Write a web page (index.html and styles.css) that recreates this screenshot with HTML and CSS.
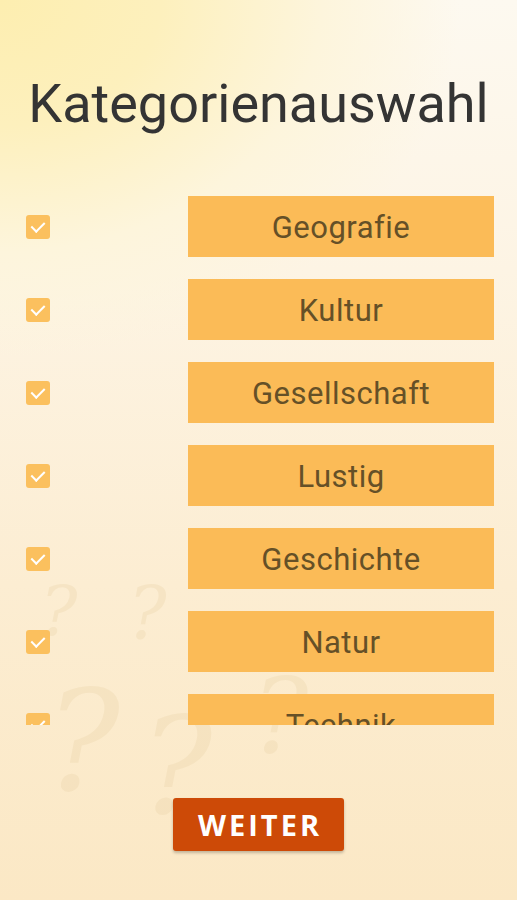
FILE: index.html
```html
<!DOCTYPE html>
<html lang="de">

<head>
    <meta charset="UTF-8">
    <meta name="viewport" content="width=device-width, initial-scale=1.0">
    <title>Kategorienauswahl</title>
    <link rel="stylesheet" href="styles.css">
</head>

<body>
    <div class="deko">
        <span class="frage f1">?</span>
        <span class="frage f2">?</span>
        <span class="frage f3">?</span>
        <span class="frage f4">?</span>
        <span class="frage f5">?</span>
    </div>
    <main>
        <h1>Kategorienauswahl</h1>
        <section class="liste">
            <div class="zeile"><span class="haken"></span><button class="kategorie">Geografie</button></div>
            <div class="zeile"><span class="haken"></span><button class="kategorie">Kultur</button></div>
            <div class="zeile"><span class="haken"></span><button class="kategorie">Gesellschaft</button></div>
            <div class="zeile"><span class="haken"></span><button class="kategorie">Lustig</button></div>
            <div class="zeile"><span class="haken"></span><button class="kategorie">Geschichte</button></div>
            <div class="zeile"><span class="haken"></span><button class="kategorie">Natur</button></div>
            <div class="zeile"><span class="haken"></span><button class="kategorie">Technik</button></div>
        </section>
        <div class="weiter">
            <button>WEITER</button>
        </div>
    </main>
</body></html>
```

FILE: styles.css
```css
html,
body {
    margin: 0;
    height: 900px;
    overflow: hidden;
}

body {
    position: relative;
    font-family: Roboto, "Liberation Sans", sans-serif;
    background:
        radial-gradient(ellipse 460px 360px at 0px 0px, #fdeeb0 0%, #fdf0bd 35%, #fdf5dc 70%, transparent 100%),
        linear-gradient(to bottom, #fdf9f0 0%, #fdf4e4 30%, #fcedd2 65%, #fbe8c5 100%);
}

.deko {
    position: absolute;
    inset: 0;
    pointer-events: none;
}

.frage {
    position: absolute;
    font-family: "DejaVu Serif", serif;
    font-style: italic;
    color: #e9d2a6;
    opacity: .3;
    line-height: .7;
}

.f1 { left: 40px; top: 588px; font-size: 70px; }
.f2 { left: 128px; top: 589px; font-size: 72px; }
.f3 { left: 45px; top: 693px; font-size: 140px; }
.f4 { left: 140px; top: 720px; font-size: 135px; }
.f5 { left: 252px; top: 681px; font-size: 105px; }

main {
    position: relative;
    display: flex;
    flex-direction: column;
}

h1 {
    margin: 74px 0 0;
    height: 122px;
    text-align: center;
    font-size: 54px;
    font-weight: 400;
    line-height: 60px;
    color: #343434;
}

.liste {
    display: flex;
    flex-direction: column;
    gap: 22px;
    height: 529px;
    overflow: hidden;
}

.zeile {
    display: flex;
    align-items: center;
    justify-content: space-between;
    padding: 0 23px 0 26px;
    flex-shrink: 0;
}

.haken {
    position: relative;
    width: 24px;
    height: 24px;
    border-radius: 3px;
    background-color: #fbc05e;
}

.haken::after {
    content: "";
    position: absolute;
    left: 8px;
    top: 4px;
    width: 6px;
    height: 11px;
    border: solid #fff;
    border-width: 0 2px 2px 0;
    transform: rotate(45deg);
}

.kategorie {
    width: 306px;
    height: 61px;
    border: none;
    border-radius: 0;
    background-color: #fbbb57;
    font-family: Roboto, "Liberation Sans", sans-serif;
    font-size: 31px;
    letter-spacing: .5px;
    color: #655027;
    padding: 0;
    padding-top: 2px;
}

.weiter {
    display: flex;
    justify-content: center;
    margin-top: 73px;
}

.weiter button {
    width: 171px;
    height: 53px;
    border: none;
    border-radius: 3px;
    background-color: #cd4a07;
    box-shadow: 0 2px 3px #0000003a;
    color: #fff;
    font-family: "Open Sans", "Liberation Sans", sans-serif;
    font-weight: 700;
    font-size: 29px;
    letter-spacing: 3px;
    padding: 0 0 0 3px;
}
```
